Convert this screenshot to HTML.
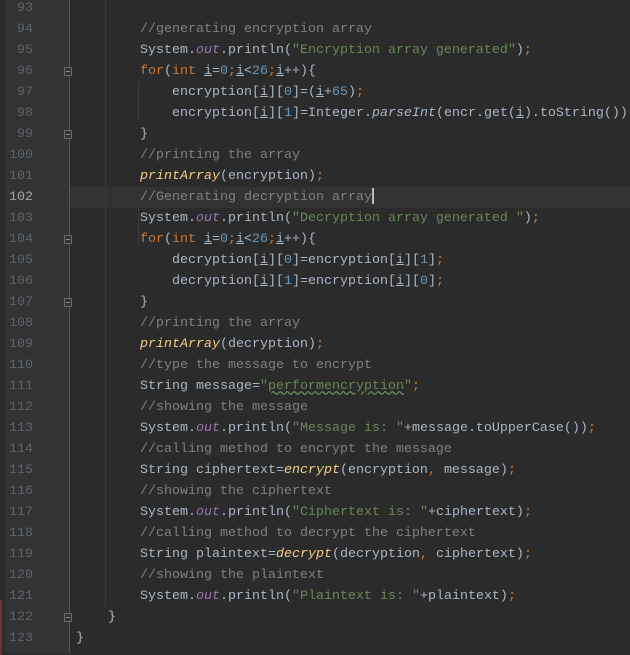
<!DOCTYPE html>
<html><head><meta charset="utf-8"><style>
body{margin:0;width:630px;height:653px;overflow:hidden;background:#2b2b2b;position:relative;font-family:"Liberation Mono",monospace;font-size:13.33px;}
#strip{position:absolute;left:0;top:0;width:5px;height:653px;background:#2a2c2e;}
#gut{position:absolute;left:5px;top:0;width:65px;height:653px;background:#313335;}
#gl{position:absolute;left:69px;top:0;width:1px;height:653px;background:#555;}
#w{position:absolute;left:0;top:2px;width:630px;height:653px;}
.ln{position:absolute;left:5px;width:28px;text-align:right;color:#606366;height:21px;line-height:21px;}
.cur{color:#a4a3a3;}
.code{position:absolute;left:76px;height:21px;line-height:21px;color:#a9b7c6;white-space:pre;}
.k{color:#cc7832}.s{color:#6a8759}.c{color:#808080}.n{color:#6897bb}
.f{color:#9876aa;font-style:italic}.m{color:#f0cf85;font-style:italic}.u{text-decoration:underline}
.hl{position:absolute;left:70px;right:0;height:21px;background:#323232;}
.guide{position:absolute;width:1px;background:#3b3b3b;}
.fold{position:absolute;left:64px;width:8px;height:9px;border:1px solid #6b6b6b;border-radius:1px;box-sizing:border-box;background:#313335;}
.fold:after{content:"";position:absolute;left:1px;top:3px;width:4px;height:1px;background:#8a8a8a;}
.caret{display:inline-block;width:2px;height:16px;background:#bbb;vertical-align:middle;}
</style></head><body>
<div id="strip"></div><div id="gut"></div>
<div id="w">
<div class="hl" style="top:185px"></div>
<div id="gl" style="top:-2px"></div>
<div class="guide" style="left:105px;top:-2px;height:607px"></div>
<div class="guide" style="left:138px;top:80px;height:38px"></div>
<div class="guide" style="left:138px;top:206px;height:38px"></div>
<div class="fold" style="top:65px"></div>
<div class="fold" style="top:128px"></div>
<div class="fold" style="top:233px"></div>
<div class="fold" style="top:296px"></div>
<div class="fold" style="top:611px"></div>
<div style="position:absolute;left:0;top:598px;width:2px;height:55px;background:#6b3434"></div>

<div class="ln" style="top:-4px">93</div>
<div class="ln" style="top:17px">94</div>
<div class="ln" style="top:38px">95</div>
<div class="ln" style="top:59px">96</div>
<div class="ln" style="top:80px">97</div>
<div class="ln" style="top:101px">98</div>
<div class="ln" style="top:122px">99</div>
<div class="ln" style="top:143px">100</div>
<div class="ln" style="top:164px">101</div>
<div class="ln cur" style="top:185px">102</div>
<div class="ln" style="top:206px">103</div>
<div class="ln" style="top:227px">104</div>
<div class="ln" style="top:248px">105</div>
<div class="ln" style="top:269px">106</div>
<div class="ln" style="top:290px">107</div>
<div class="ln" style="top:311px">108</div>
<div class="ln" style="top:332px">109</div>
<div class="ln" style="top:353px">110</div>
<div class="ln" style="top:374px">111</div>
<div class="ln" style="top:395px">112</div>
<div class="ln" style="top:416px">113</div>
<div class="ln" style="top:437px">114</div>
<div class="ln" style="top:458px">115</div>
<div class="ln" style="top:479px">116</div>
<div class="ln" style="top:500px">117</div>
<div class="ln" style="top:521px">118</div>
<div class="ln" style="top:542px">119</div>
<div class="ln" style="top:563px">120</div>
<div class="ln" style="top:584px">121</div>
<div class="ln" style="top:605px">122</div>
<div class="ln" style="top:626px">123</div>

<div class="code" style="top:17px">        <span class="c">//generating encryption array</span></div>
<div class="code" style="top:38px">        System.<span class="f">out</span>.println(<span class="s">"Encryption array generated"</span>)<span class="k">;</span></div>
<div class="code" style="top:59px">        <span class="k">for</span>(<span class="k">int </span><span class="u">i</span>=<span class="n">0</span><span class="k">;</span><span class="u">i</span>&lt;<span class="n">26</span><span class="k">;</span><span class="u">i</span>++){</div>
<div class="code" style="top:80px">            encryption[<span class="u">i</span>][<span class="n">0</span>]=(<span class="u">i</span>+<span class="n">65</span>)<span class="k">;</span></div>
<div class="code" style="top:101px">            encryption[<span class="u">i</span>][<span class="n">1</span>]=Integer.<span class="f" style="color:#a9b7c6">parseInt</span>(encr.get(<span class="u">i</span>).toString())<span class="k">;</span></div>
<div class="code" style="top:122px">        }</div>
<div class="code" style="top:143px">        <span class="c">//printing the array</span></div>
<div class="code" style="top:164px">        <span class="m">printArray</span>(encryption)<span class="k">;</span></div>
<div class="code" style="top:185px">        <span class="c">//Generating decryption array</span><span class="caret"></span></div>
<div class="code" style="top:206px">        System.<span class="f">out</span>.println(<span class="s">"Decryption array generated "</span>)<span class="k">;</span></div>
<div class="code" style="top:227px">        <span class="k">for</span>(<span class="k">int </span><span class="u">i</span>=<span class="n">0</span><span class="k">;</span><span class="u">i</span>&lt;<span class="n">26</span><span class="k">;</span><span class="u">i</span>++){</div>
<div class="code" style="top:248px">            decryption[<span class="u">i</span>][<span class="n">0</span>]=encryption[<span class="u">i</span>][<span class="n">1</span>]<span class="k">;</span></div>
<div class="code" style="top:269px">            decryption[<span class="u">i</span>][<span class="n">1</span>]=encryption[<span class="u">i</span>][<span class="n">0</span>]<span class="k">;</span></div>
<div class="code" style="top:290px">        }</div>
<div class="code" style="top:311px">        <span class="c">//printing the array</span></div>
<div class="code" style="top:332px">        <span class="m">printArray</span>(decryption)<span class="k">;</span></div>
<div class="code" style="top:353px">        <span class="c">//type the message to encrypt</span></div>
<div class="code" style="top:374px">        String message=<span class="s">"<span style="text-decoration:underline wavy #6a8759">performencryption</span>"</span><span class="k">;</span></div>
<div class="code" style="top:395px">        <span class="c">//showing the message</span></div>
<div class="code" style="top:416px">        System.<span class="f">out</span>.println(<span class="s">"Message is: "</span>+message.toUpperCase())<span class="k">;</span></div>
<div class="code" style="top:437px">        <span class="c">//calling method to encrypt the message</span></div>
<div class="code" style="top:458px">        String ciphertext=<span class="m">encrypt</span>(encryption<span class="k">, </span>message)<span class="k">;</span></div>
<div class="code" style="top:479px">        <span class="c">//showing the ciphertext</span></div>
<div class="code" style="top:500px">        System.<span class="f">out</span>.println(<span class="s">"Ciphertext is: "</span>+ciphertext)<span class="k">;</span></div>
<div class="code" style="top:521px">        <span class="c">//calling method to decrypt the ciphertext</span></div>
<div class="code" style="top:542px">        String plaintext=<span class="m">decrypt</span>(decryption<span class="k">, </span>ciphertext)<span class="k">;</span></div>
<div class="code" style="top:563px">        <span class="c">//showing the plaintext</span></div>
<div class="code" style="top:584px">        System.<span class="f">out</span>.println(<span class="s">"Plaintext is: "</span>+plaintext)<span class="k">;</span></div>
<div class="code" style="top:605px">    }</div>
<div class="code" style="top:626px">}</div>
</div>
</body></html>
